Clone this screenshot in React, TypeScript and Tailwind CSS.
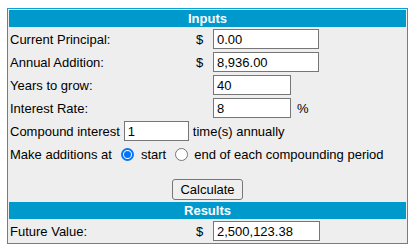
import React from "react";

const font = { fontFamily: '"Liberation Sans", Arial, sans-serif' };

function Field({ value, w }: { value: string; w: string }) {
  return (
    <div
      className={`h-[20px] ${w} border border-[#767676] bg-white px-[3px] flex items-center text-[13px] text-black leading-none`}
    >
      {value}
    </div>
  );
}

function Radio({ checked }: { checked: boolean }) {
  return checked ? (
    <span className="w-[13px] h-[13px] rounded-full border-[2px] border-[#0075ff] bg-white flex items-center justify-center box-border">
      <span className="block w-[7px] h-[7px] rounded-full bg-[#0075ff]" />
    </span>
  ) : (
    <span className="block w-[13px] h-[13px] rounded-full border border-[#767676] bg-white box-border" />
  );
}

function Row({
  label,
  dollar,
  children,
}: {
  label: string;
  dollar?: boolean;
  children: React.ReactNode;
}) {
  return (
    <div className="h-[22px] flex items-center">
      <div className="w-[186px] pl-[1px]">{label}</div>
      <div className="w-[18px] pl-[1px]">{dollar ? "$" : ""}</div>
      {children}
    </div>
  );
}

export default function App() {
  return (
    <div className="bg-white w-[414px] h-[248px] pt-[8px] pl-[7px]" style={font}>
      <div className="w-[401px] h-[236px] border border-[#0ea0d8] bg-[#eeeeee] p-[1px] text-[13px] text-black leading-none flex flex-col gap-[1px]">
        <div className="h-[17px] bg-[#0099cc] text-white font-bold flex items-center justify-center">
          Inputs
        </div>
        <Row label="Current Principal:" dollar>
          <Field value="0.00" w="w-[106px]" />
        </Row>
        <Row label="Annual Addition:" dollar>
          <Field value="8,936.00" w="w-[106px]" />
        </Row>
        <Row label="Years to grow:">
          <Field value="40" w="w-[78px]" />
        </Row>
        <Row label="Interest Rate:">
          <Field value="8" w="w-[78px]" />
          <span className="ml-[6px]">%</span>
        </Row>
        <div className="h-[22px] flex items-center pl-[1px]">
          <span>Compound interest</span>
          <span className="ml-[4px]">
            <Field value="1" w="w-[65px]" />
          </span>
          <span className="ml-[4px]">time(s) annually</span>
        </div>
        <div className="h-[22px] flex items-center pl-[1px]">
          <span>Make additions at</span>
          <span className="ml-[9px]">
            <Radio checked />
          </span>
          <span className="ml-[7px]">start</span>
          <span className="ml-[9px]">
            <Radio checked={false} />
          </span>
          <span className="ml-[6px]">end of each compounding period</span>
        </div>
        <div className="h-[35px] flex justify-center items-start pt-[13px]">
          <div className="h-[21px] w-[71px] border border-[#767676] rounded-[3px] bg-[#efefef] flex items-center justify-center">
            Calculate
          </div>
        </div>
        <div className="h-[17px] bg-[#0099cc] text-white font-bold flex items-center justify-center">
          Results
        </div>
        <Row label="Future Value:" dollar>
          <Field value="2,500,123.38" w="w-[107px]" />
        </Row>
      </div>
    </div>
  );
}
